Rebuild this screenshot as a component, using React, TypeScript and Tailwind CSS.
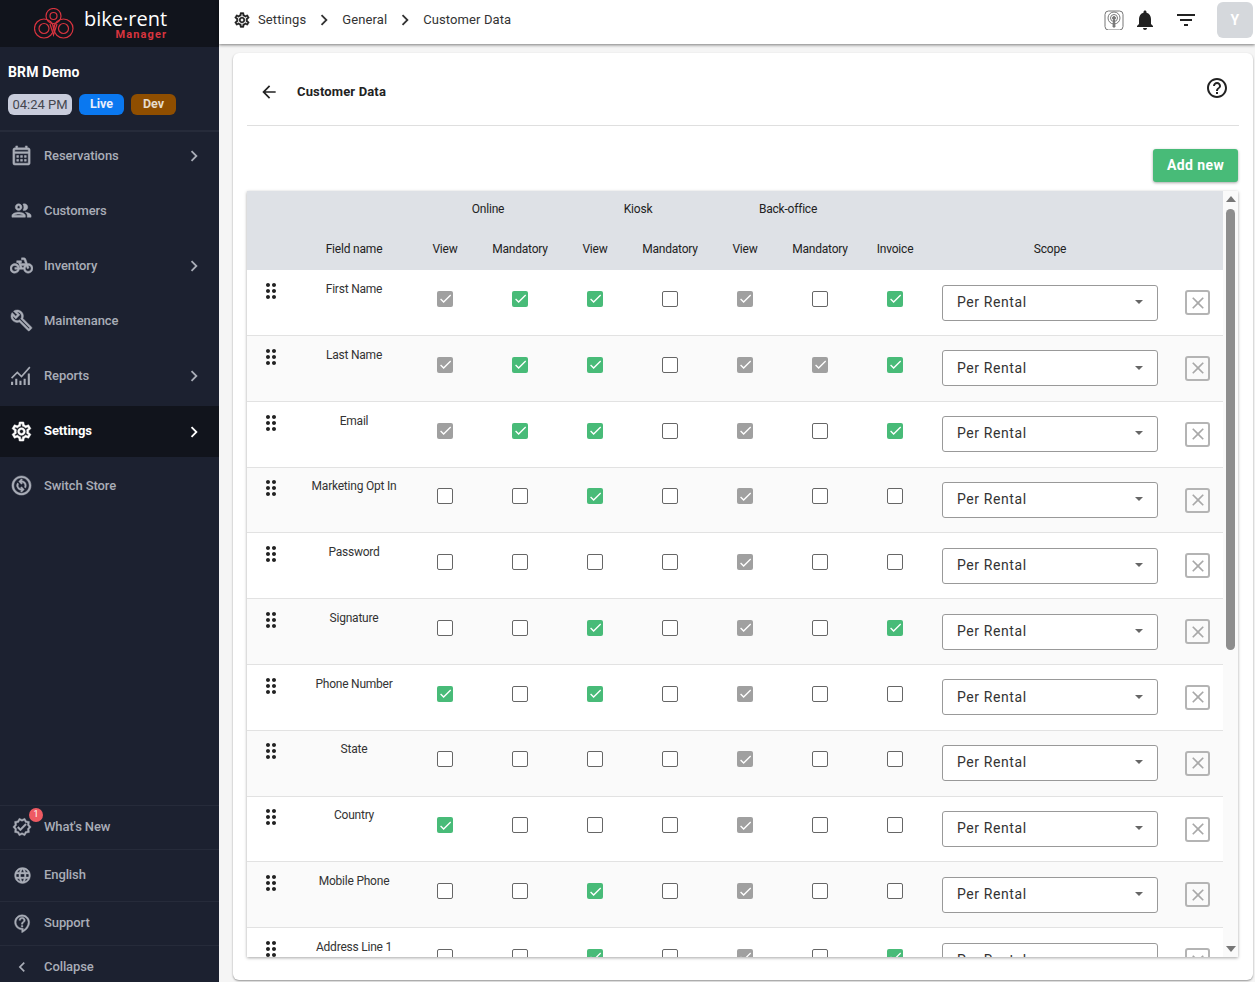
import React from 'react';
import {
  MdArrowBack,
  MdChevronLeft,
  MdChevronRight,
  MdClose,
  MdDragIndicator,
  MdFilterList,
  MdHelpOutline,
  MdLanguage,
  MdNotifications,
  MdOutlineBuild,
  MdOutlineCalendarMonth,
  MdOutlineChangeCircle,
  MdOutlineContactSupport,
  MdOutlinePedalBike,
  MdOutlinePeople,
  MdOutlineSettings,
  MdOutlineVerified,
  MdCheck,
} from 'react-icons/md';

type Check = 'g' | 'G' | '_';

const rows: { name: string; checks: Check[] }[] = [
  { name: 'First Name', checks: ['g', 'G', 'G', '_', 'g', '_', 'G'] },
  { name: 'Last Name', checks: ['g', 'G', 'G', '_', 'g', 'g', 'G'] },
  { name: 'Email', checks: ['g', 'G', 'G', '_', 'g', '_', 'G'] },
  { name: 'Marketing Opt In', checks: ['_', '_', 'G', '_', 'g', '_', '_'] },
  { name: 'Password', checks: ['_', '_', '_', '_', 'g', '_', '_'] },
  { name: 'Signature', checks: ['_', '_', 'G', '_', 'g', '_', 'G'] },
  { name: 'Phone Number', checks: ['G', '_', 'G', '_', 'g', '_', '_'] },
  { name: 'State', checks: ['_', '_', '_', '_', 'g', '_', '_'] },
  { name: 'Country', checks: ['G', '_', '_', '_', 'g', '_', '_'] },
  { name: 'Mobile Phone', checks: ['_', '_', 'G', '_', 'g', '_', '_'] },
  { name: 'Address Line 1', checks: ['_', '_', 'G', '_', 'g', '_', 'G'] },
];

// thicker icon strokes, without outlining the empty 24x24 box path of the md icons
const boldIcon = "stroke-current stroke-[0.5] [&_[fill='none']]:stroke-none";

// bars with a trend line above them
const ReportsIcon = ({ size, className }: { size?: number; className?: string }) => (
  <svg width={size} height={size} viewBox="0 0 22 22" fill="none" stroke="currentColor" className={className}>
    <path d="M2 20v-3M6 20v-6M10 20v-4M14 20v-6M18 20V9" strokeWidth="2" />
    <path d="M1.5 13.5L7 8l4 4 8-9" strokeWidth="1.5" />
  </svg>
);

const navItems = [
  { label: 'Reservations', icon: MdOutlineCalendarMonth, arrow: true },
  { label: 'Customers', icon: MdOutlinePeople },
  { label: 'Inventory', icon: MdOutlinePedalBike, arrow: true },
  { label: 'Maintenance', icon: MdOutlineBuild },
  { label: 'Reports', icon: ReportsIcon, arrow: true },
  { label: 'Settings', icon: MdOutlineSettings, arrow: true, active: true },
  { label: 'Switch Store', icon: MdOutlineChangeCircle },
];

const Logo = () => (
  <svg width="40" height="31" viewBox="0 0 40 31" fill="none" stroke="#d8343f" strokeWidth="1.2">
    <circle cx="19.5" cy="8" r="7.5" />
    <circle cx="19.5" cy="8" r="3.5" />
    <circle cx="10" cy="20.5" r="9.5" />
    <circle cx="10" cy="20.5" r="5" />
    <circle cx="29.5" cy="20.5" r="9.5" />
    <circle cx="29.5" cy="20.5" r="5" />
    <path d="M16 16l3.5 11 3.5-11" />
  </svg>
);

const Sidebar = () => (
  <aside className="flex h-[982px] w-[219px] shrink-0 flex-col bg-[#1c2130] text-[13px] font-medium tracking-[-0.1px] text-[#a9adb7]">
    <div className="flex h-[47px] items-center bg-[#11141c] pl-[34px]">
      <Logo />
      <div className="ml-[10px] flex flex-col items-end pt-[1px]">
        <span className="text-[20px] leading-[21px] font-medium tracking-normal text-white [font-family:'Open_Sans',sans-serif]">bike·rent</span>
        <span className="text-[11px] leading-[12px] font-bold tracking-[1.1px] text-[#d8343f]">Manager</span>
      </div>
    </div>
    <div className="h-[85px] border-b-2 border-[#262b3a] pt-[17px] pl-2">
      <div className="text-sm leading-4 font-bold tracking-[0.15px] text-white">BRM Demo</div>
      <div className="mt-[14px] flex gap-[7px] tracking-normal">
        <span className="flex h-[21px] w-[64px] items-center justify-center rounded-md bg-[#c8ccdb] text-[13px] font-normal text-[#44474f]">04:24 PM</span>
        <span className="flex h-[21px] w-[45px] items-center justify-center rounded-md bg-[#0a78f0] text-[12.5px] font-bold text-[#e8eefc]">Live</span>
        <span className="flex h-[21px] w-[45px] items-center justify-center rounded-md bg-[#8f4e00] text-[12.5px] font-bold text-[#e6dccd]">Dev</span>
      </div>
    </div>
    <nav className="mt-[-4px] flex flex-col">
      {navItems.map((item) => {
        const Icon = item.icon;
        return (
          <div
            key={item.label}
            className={`flex items-center ${item.active ? 'mt-[3px] mb-[1px] h-[51px] bg-[#11141c] font-bold text-white' : 'h-[55px]'}`}
          >
            <div className="flex w-[44px] justify-center pr-[1px]">
              <Icon size={23} className={item.icon === ReportsIcon ? '' : boldIcon} />
            </div>
            <span className={`flex-1 ${item.active ? 'pb-[2px]' : ''}`}>{item.label}</span>
            {item.arrow && <MdChevronRight size={22} className="mr-[14px]" />}
          </div>
        );
      })}
    </nav>
    <div className="mt-auto flex flex-col">
      <div className="flex h-[44px] items-center border-t border-[#262b3a] pb-[1px]">
        <div className="relative flex w-[44px] justify-center">
          <MdOutlineVerified size={20} className={boldIcon} />
          <span className="absolute top-[-9px] left-[29px] flex h-[14px] w-[14px] items-center justify-center rounded-full bg-[#ee5a62] text-[9px] font-normal text-white">1</span>
        </div>
        <span>What's New</span>
      </div>
      <div className="flex h-[52px] items-center border-t border-[#262b3a] pb-[1px]">
        <div className="flex w-[44px] justify-center">
          <MdLanguage size={19} className={boldIcon} />
        </div>
        <span>English</span>
      </div>
      <div className="flex h-[44px] items-center border-t border-[#262b3a] pb-[1px]">
        <div className="flex w-[44px] justify-center">
          <MdOutlineContactSupport size={19} className={boldIcon} />
        </div>
        <span>Support</span>
      </div>
      <div className="flex h-[37px] items-center border-t border-[#262b3a] pt-[5px]">
        <div className="flex w-[44px] justify-center">
          <MdChevronLeft size={20} />
        </div>
        <span>Collapse</span>
      </div>
    </div>
  </aside>
);

const TopBar = () => (
  <header className="relative z-10 flex h-[44px] shrink-0 items-center bg-white pr-[2px] pb-[4px] pl-[14px] text-[13px] tracking-[0.1px] text-[#333] shadow-[0_1px_3px_rgba(0,0,0,0.5)]">
    <MdOutlineSettings size={18} className={`text-[#222] ${boldIcon}`} />
    <span className="ml-[7px]">Settings</span>
    <MdChevronRight size={22} className="mx-[7px] text-[#333]" />
    <span>General</span>
    <MdChevronRight size={22} className="mx-[7px] text-[#333]" />
    <span>Customer Data</span>
    <div className="ml-auto flex items-center">
      <svg width="20" height="20" viewBox="0 0 20 20" fill="none" stroke="#777" strokeWidth="1">
        <rect x="1" y="1" width="18" height="19" rx="3.5" />
        <circle cx="10" cy="8" r="1.5" fill="#777" />
        <circle cx="10" cy="8" r="3.5" />
        <circle cx="10" cy="8" r="6" />
        <path d="M9 17l.5-7h1l.5 7z" fill="#777" />
      </svg>
      <MdNotifications size={24} className="ml-[9px] text-[#222]" />
      <MdFilterList size={24} className="ml-[17px] text-[#222]" />
      <div className="ml-[19px] flex h-[36px] w-[36px] items-center justify-center rounded-md bg-[#d5d8dc] text-sm font-bold text-white">Y</div>
    </div>
  </header>
);

const CheckCell = ({ kind }: { kind: Check }) => (
  <div className="flex w-[75px] items-start justify-center pt-[20.72px]">
    {kind === '_' ? (
      <div className="h-4 w-4 rounded-[2px] border border-[#666] bg-white" />
    ) : (
      <div className={`flex h-4 w-4 items-center justify-center rounded-[2px] ${kind === 'G' ? 'bg-[#48bb78]' : 'bg-[#a0a0a0]'}`}>
        <MdCheck size={15} className="text-white" />
      </div>
    )}
  </div>
);

const HeadCell = ({ label }: { label: string }) => (
  <div className="w-[75px] text-center">{label}</div>
);

const Table = () => (
  <div className="flex h-[766px] w-[991px] overflow-hidden bg-white shadow-[0_1px_3px_rgba(0,0,0,0.35)]">
    <div className="w-[976px] shrink-0">
      <div className="h-[79.2px] bg-[#dee1e6] text-xs tracking-[-0.2px] text-[#222]">
        <div className="flex h-[36px] items-center pl-[166px]">
          <div className="w-[150px] text-center">Online</div>
          <div className="w-[150px] text-center">Kiosk</div>
          <div className="w-[150px] text-center">Back-office</div>
        </div>
        <div className="flex h-[43px] items-center">
          <div className="w-[53.5px]" />
          <div className="w-[107px] text-center">Field name</div>
          <HeadCell label="View" />
          <HeadCell label="Mandatory" />
          <HeadCell label="View" />
          <HeadCell label="Mandatory" />
          <HeadCell label="View" />
          <HeadCell label="Mandatory" />
          <HeadCell label="Invoice" />
          <div className="w-[235px] text-center">Scope</div>
        </div>
      </div>
      {rows.map((row, i) => (
        <div key={row.name} className={`flex h-[65.8px] border-b border-[#e2e2e2] ${i % 2 ? 'bg-[#fafafa]' : 'bg-white'}`}>
          <div className="flex w-[53.5px] justify-center pt-[8.72px] pr-[6px]">
            <MdDragIndicator size={24} className="text-[#222]" />
          </div>
          <div className="w-[107px] pt-[10.72px] text-center text-xs tracking-[-0.22px] text-[#333]">{row.name}</div>
          {row.checks.map((c, j) => (
            <CheckCell key={j} kind={c} />
          ))}
          <div className="flex w-[235px] justify-center pt-[14.4px]">
            <div className="flex h-[36px] w-[216px] items-center justify-between rounded-[3px] border border-[#999] bg-white pr-[14px] pb-[1.6px] pl-[14px] text-sm tracking-[0.6px] text-[#333]">
              <span>Per Rental</span>
              <div className="h-0 w-0 border-x-[4px] border-t-[4px] border-x-transparent border-t-[#666]" />
            </div>
          </div>
          <div className="flex flex-1 items-start justify-center pt-[20px] pl-[5px]">
            <div className="flex h-[25px] w-[25px] items-center justify-center rounded-[3px] border-2 border-[#b4b4b4] text-[#a8a8a8]">
              <MdClose size={20} />
            </div>
          </div>
        </div>
      ))}
    </div>
    <div className="flex flex-1 flex-col items-center bg-[#fafafa] pt-[5px]">
      <div className="h-0 w-0 border-x-[5px] border-b-[6px] border-x-transparent border-b-[#777]" />
      <div className="mt-[7px] h-[441px] w-[9px] rounded-full bg-[#8e8e8e]" />
      <div className="mt-auto mb-[5px] h-0 w-0 border-x-[5px] border-t-[6px] border-x-transparent border-t-[#777]" />
    </div>
  </div>
);

export default function App() {
  return (
    <div className="flex h-[982px] w-[1255px] overflow-hidden bg-[#f5f5f5] [font-family:Roboto,sans-serif]">
      <Sidebar />
      <div className="flex min-w-0 flex-1 flex-col">
        <TopBar />
        <main className="mt-[9px] ml-[14px] h-[927px] w-[1020px] rounded-md bg-white px-[14px] shadow-[0_1px_2px_rgba(0,0,0,0.4)]">
          <div className="flex h-[73px] items-center border-b border-[#dfdfdf] pt-[6px]">
            <MdArrowBack size={20} className="ml-[12px] text-[#222]" />
            <span className="ml-[18px] text-[13px] font-bold tracking-[0.15px] text-[#222]">Customer Data</span>
            <MdHelpOutline size={24} className="mt-[-8px] mr-[10px] ml-auto text-[#222]" />
          </div>
          <div className="flex justify-end pt-[23px] pb-[9px]">
            <button className="mr-[1px] h-[33px] w-[85px] rounded-[3px] bg-[#48bb78] pb-[1px] text-sm font-bold tracking-[0.4px] text-white shadow-[0_1px_3px_rgba(0,0,0,0.35)]">
              Add new
            </button>
          </div>
          <Table />
        </main>
      </div>
    </div>
  );
}
